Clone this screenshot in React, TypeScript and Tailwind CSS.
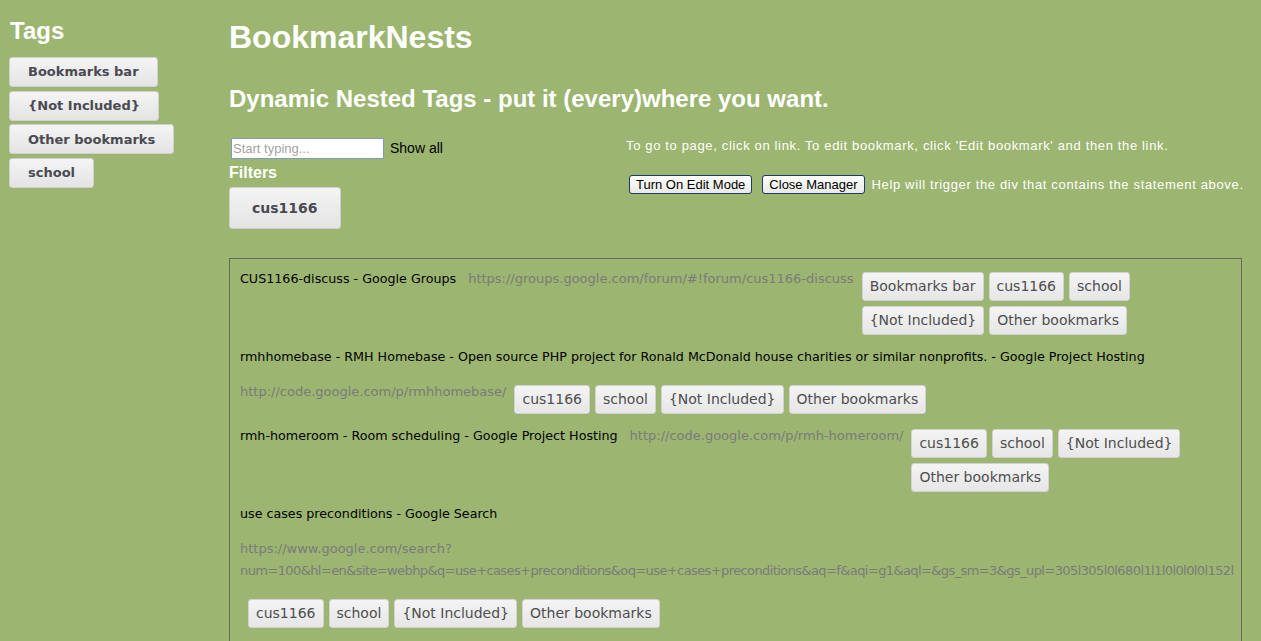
import React from 'react';

const sideTags = ['Bookmarks bar', '{Not Included}', 'Other bookmarks', 'school'];

const common = ['cus1166', 'school', '{Not Included}', 'Other bookmarks'];

type UrlLine = { text: string; tight?: boolean };

const bookmarks: { title: string; url: UrlLine[]; tags: string[] }[] = [
  {
    title: 'CUS1166-discuss - Google Groups',
    url: [{ text: 'https://groups.google.com/forum/#!forum/cus1166-discuss' }],
    tags: ['Bookmarks bar', ...common],
  },
  {
    title:
      'rmhhomebase - RMH Homebase - Open source PHP project for Ronald McDonald house charities or similar nonprofits. - Google Project Hosting',
    url: [{ text: 'http://code.google.com/p/rmhhomebase/' }],
    tags: common,
  },
  {
    title: 'rmh-homeroom - Room scheduling - Google Project Hosting',
    url: [{ text: 'http://code.google.com/p/rmh-homeroom/' }],
    tags: common,
  },
  {
    title: 'use cases preconditions - Google Search',
    url: [
      { text: 'https://www.google.com/search?' },
      {
        text: 'num=100&hl=en&site=webhp&q=use+cases+preconditions&oq=use+cases+preconditions&aq=f&aqi=g1&aql=&gs_sm=3&gs_upl=305l305l0l680l1l1l0l0l0l0l152l',
        tight: true,
      },
    ],
    tags: common,
  },
];

function Tag({ label }: { label: string }) {
  return (
    <span className="flex h-[29px] items-center rounded-[3px] border border-[#d2d2d2] bg-gradient-to-b from-[#f4f4f4] to-[#e6e6e6] px-[7px] text-[14px] text-[#4e4e4e]">
      {label}
    </span>
  );
}

function Bookmark({ item }: { item: (typeof bookmarks)[number] }) {
  return (
    <div className="mb-[11px] flex flex-wrap items-start gap-y-[13px]">
      <span className="mr-3 text-[12.7px] leading-[22px] text-black">{item.title}</span>
      <span className="min-w-0 whitespace-nowrap text-[13px] leading-[22px] text-[#7b7b7b]">
        {item.url.map((line, i) => (
          <div key={i} className={line.tight ? 'tracking-[-0.6px]' : ''}>
            {line.text}
          </div>
        ))}
      </span>
      <div className="ml-2 mt-1 flex min-w-[140px] flex-1 flex-wrap gap-[5px]">
        {item.tags.map((t) => (
          <Tag key={t} label={t} />
        ))}
      </div>
    </div>
  );
}

export default function App() {
  return (
    <div className="flex h-[641px] overflow-hidden bg-[#9cb570] font-['Liberation_Sans',Arial,sans-serif]">
      <aside className="w-[229px] shrink-0 pl-[9px] pt-[19px]">
        <h2 className="pl-px text-[24px] font-bold leading-[24px] text-white">Tags</h2>
        <div className="mt-[14px] flex flex-col items-start gap-[3.7px] font-['DejaVu_Sans',Verdana,sans-serif]">
          {sideTags.map((t) => (
            <button
              key={t}
              className="h-[30px] rounded-[3px] border border-[#d0d0d0] bg-gradient-to-b from-[#f4f4f4] to-[#e4e4e4] px-[18px] text-[13px] font-bold text-[#4a4a52]"
            >
              {t}
            </button>
          ))}
        </div>
      </aside>

      <main className="w-[1013px] shrink-0 pt-[21px]">
        <h1 className="text-[32px] font-bold leading-[32px] text-white">BookmarkNests</h1>
        <h2 className="mt-[34px] text-[24px] font-bold leading-[24px] text-white">
          Dynamic Nested Tags - put it (every)where you want.
        </h2>

        <div className="mt-[27px] flex">
          <div className="w-[397px] shrink-0">
            <div className="flex items-center">
              <input
                placeholder="Start typing..."
                className="ml-[2px] h-[21px] w-[153px] border border-[#7f9db9] bg-white px-[1px] text-[13px] text-black outline-none placeholder:text-[#a3a3a3]"
              />
              <span className="ml-[6px] text-[14px] text-black">Show all</span>
            </div>
            <div className="mt-[6px] text-[16px] font-bold leading-[16px] text-white">Filters</div>
            <button className="mt-[6px] h-[42px] rounded-[3px] border border-[#cfcfcf] bg-gradient-to-b from-[#f4f4f4] to-[#e4e4e4] px-[22px] font-['DejaVu_Sans',Verdana,sans-serif] text-[14px] font-bold text-[#4a4a52]">
              cus1166
            </button>
          </div>

          <div className="min-w-0 flex-1 whitespace-nowrap text-[13px] text-white">
            <p className="leading-[16px] tracking-[0.65px]">
              To go to page, click on link. To edit bookmark, click 'Edit bookmark' and then the link.
            </p>
            <div className="mt-[21px] flex items-center">
              <button className="ml-[3px] h-[19px] shrink-0 rounded-[3px] border border-[#1c3a6b] bg-gradient-to-b from-white to-[#e8e8e4] px-[6px] text-[13px] leading-[15px] text-black">
                Turn On Edit Mode
              </button>
              <button className="ml-[10px] h-[19px] shrink-0 rounded-[3px] border border-[#1c3a6b] bg-gradient-to-b from-white to-[#e8e8e4] px-[6px] text-[13px] leading-[15px] text-black">
                Close Manager
              </button>
              <span className="ml-[7px] shrink-0 tracking-[0.65px]">
                Help will trigger the div that contains the statement above.
              </span>
            </div>
          </div>
        </div>

        <section className="mt-[29px] h-[400px] border border-[#666a5c] px-[10px] pt-[9px] font-['DejaVu_Sans',Verdana,sans-serif]">
          {bookmarks.map((b, i) => (
            <Bookmark key={i} item={b} />
          ))}
        </section>
      </main>
    </div>
  );
}
